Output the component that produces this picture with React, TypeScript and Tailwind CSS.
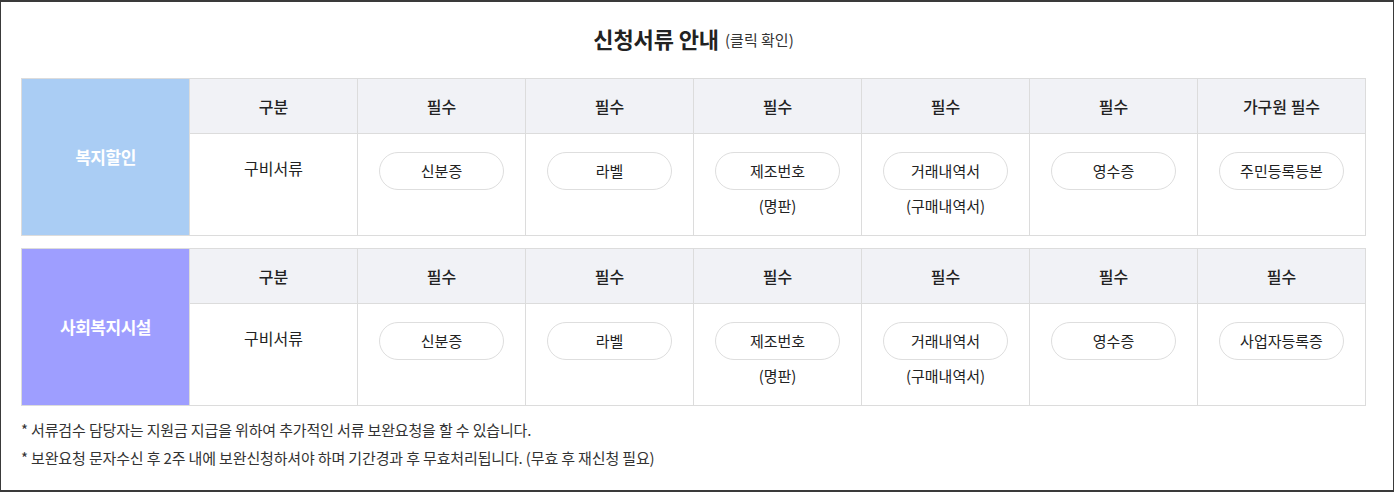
const sections = [
  {
    label: "복지할인",
    color: "bg-[#aacdf4]",
    heads: ["필수", "필수", "필수", "필수", "필수", "가구원 필수"],
    docs: [
      { name: "신분증" },
      { name: "라벨" },
      { name: "제조번호", note: "(명판)" },
      { name: "거래내역서", note: "(구매내역서)" },
      { name: "영수증" },
      { name: "주민등록등본" },
    ],
  },
  {
    label: "사회복지시설",
    color: "bg-[#9e9eff]",
    heads: ["필수", "필수", "필수", "필수", "필수", "필수"],
    docs: [
      { name: "신분증" },
      { name: "라벨" },
      { name: "제조번호", note: "(명판)" },
      { name: "거래내역서", note: "(구매내역서)" },
      { name: "영수증" },
      { name: "사업자등록증" },
    ],
  },
];

function DocTable({ section }: { section: (typeof sections)[number] }) {
  return (
    <table className="w-[1345px] table-fixed border-collapse">
      <tbody>
        <tr>
          <td
            rowSpan={2}
            className={`${section.color} border border-[#dcdcdc] text-center align-middle text-[17px] font-bold tracking-[-0.5px] text-white`}
          >
            {section.label}
          </td>
          <th className="h-[55px] border border-[#dcdcdc] bg-[#f1f2f6] text-center text-[16px] font-medium text-[#222]">
            구분
          </th>
          {section.heads.map((h, i) => (
            <th
              key={i}
              className="h-[55px] border border-[#dcdcdc] bg-[#f1f2f6] text-center text-[16px] font-medium text-[#222]"
            >
              {h}
            </th>
          ))}
        </tr>
        <tr>
          <td className="h-[102px] border border-[#dcdcdc] pt-[23px] text-center align-top text-[16px] leading-[22px] text-[#222]">
            구비서류
          </td>
          {section.docs.map((d, i) => (
            <td
              key={i}
              className="h-[102px] border border-[#dcdcdc] pt-[18px] text-center align-top text-[#222]"
            >
              <div className="flex flex-col items-center">
                <div className="flex h-[38px] w-[125px] items-center justify-center rounded-full border border-[#dedede] bg-white text-[15px]">
                  {d.name}
                </div>
                {d.note && (
                  <div className="mt-[5px] text-[15px] leading-[22px]">{d.note}</div>
                )}
              </div>
            </td>
          ))}
        </tr>
      </tbody>
    </table>
  );
}

export default function App() {
  return (
    <div
      className="h-[492px] w-[1394px] border-x border-t-2 border-b-2 border-[#3a3a3a] bg-white pl-[20px] text-[#222]"
      style={{ fontFamily: '"Noto Sans CJK KR", "Noto Sans", sans-serif' }}
    >
      <div className="flex h-[76px] items-center justify-center pb-[4px] pr-[27px]">
        <span className="text-[22px] font-bold tracking-[-0.1px] text-[#222]">신청서류 안내</span>
        <span className="ml-[6px] mt-[4px] text-[15px] text-[#333]">(클릭 확인)</span>
      </div>
      <div className="flex flex-col gap-[12px]">
        {sections.map((s, i) => (
          <DocTable key={i} section={s} />
        ))}
      </div>
      <div className="mt-[13px] flex flex-col gap-[6px] text-[15px] leading-[22px] tracking-[-0.15px] text-[#333]">
        <p>* 서류검수 담당자는 지원금 지급을 위하여 추가적인 서류 보완요청을 할 수 있습니다.</p>
        <p>* 보완요청 문자수신 후 2주 내에 보완신청하셔야 하며 기간경과 후 무효처리됩니다. (무효 후 재신청 필요)</p>
      </div>
    </div>
  );
}
